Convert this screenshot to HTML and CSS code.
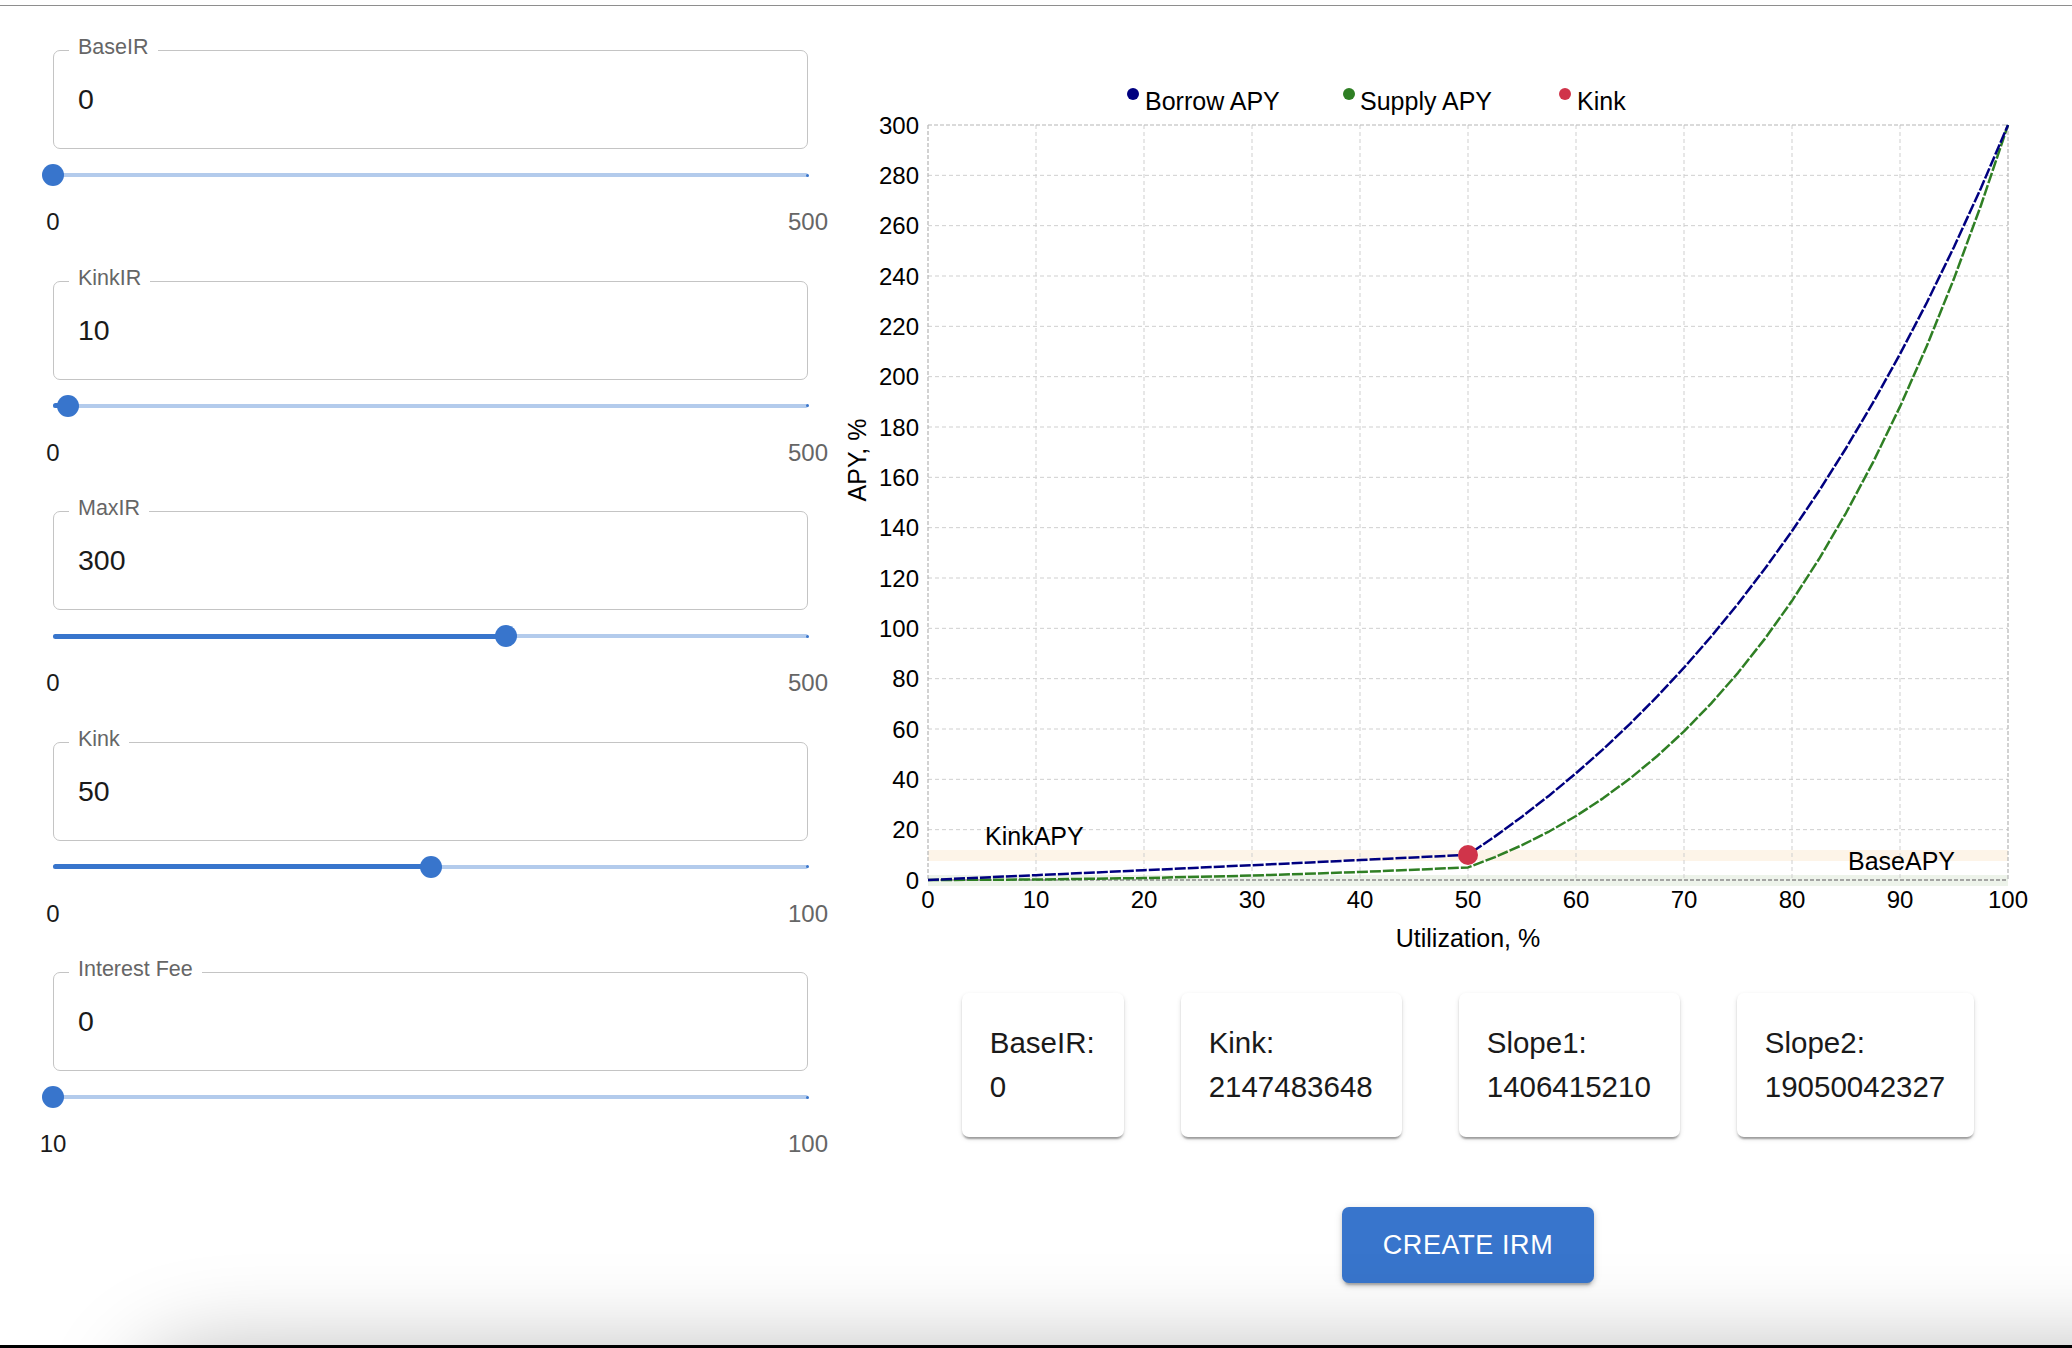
FILE: index.html
```html
<!DOCTYPE html>
<html lang="en">
<head>
<meta charset="utf-8">
<title>IRM</title>
<link rel="stylesheet" href="styles.css">
</head>
<body>
<div class="topline"></div>
<main class="layout">
  <section class="controls">
    <div class="param">
      <div class="field"><span class="field-label">BaseIR</span><span class="field-value">0</span></div>
      <div class="slider">
        <div class="rail"></div>
        <div class="track" style="width:0%"></div>
        <span class="end-dot"></span>
        <div class="thumb" style="left:0%"></div>
      </div>
      <div class="marks"><span class="mlabel active">0</span><span class="mlabel">500</span></div>
    </div>
    <div class="param">
      <div class="field"><span class="field-label">KinkIR</span><span class="field-value">10</span></div>
      <div class="slider">
        <div class="rail"></div>
        <div class="track" style="width:2%"></div>
        <span class="end-dot"></span>
        <div class="thumb" style="left:2%"></div>
      </div>
      <div class="marks"><span class="mlabel active">0</span><span class="mlabel">500</span></div>
    </div>
    <div class="param">
      <div class="field"><span class="field-label">MaxIR</span><span class="field-value">300</span></div>
      <div class="slider">
        <div class="rail"></div>
        <div class="track" style="width:60%"></div>
        <span class="end-dot"></span>
        <div class="thumb" style="left:60%"></div>
      </div>
      <div class="marks"><span class="mlabel active">0</span><span class="mlabel">500</span></div>
    </div>
    <div class="param">
      <div class="field"><span class="field-label">Kink</span><span class="field-value">50</span></div>
      <div class="slider">
        <div class="rail"></div>
        <div class="track" style="width:50%"></div>
        <span class="end-dot"></span>
        <div class="thumb" style="left:50%"></div>
      </div>
      <div class="marks"><span class="mlabel active">0</span><span class="mlabel">100</span></div>
    </div>
    <div class="param">
      <div class="field"><span class="field-label">Interest Fee</span><span class="field-value">0</span></div>
      <div class="slider">
        <div class="rail"></div>
        <div class="track" style="width:0%"></div>
        <span class="end-dot"></span>
        <div class="thumb" style="left:0%"></div>
      </div>
      <div class="marks"><span class="mlabel active">10</span><span class="mlabel">100</span></div>
    </div>
  </section>

  <section class="results">
    <svg class="chart" width="1208" height="900" viewBox="0 0 1208 900" xmlns="http://www.w3.org/2000/svg">
      <!-- legend -->
      <g class="legend">
        <circle cx="269" cy="34" r="6" fill="#000080"/>
        <text x="281" y="50">Borrow APY</text>
        <circle cx="485" cy="34" r="6" fill="#2f7f24"/>
        <text x="496" y="50">Supply APY</text>
        <circle cx="701" cy="34" r="6" fill="#d0344a"/>
        <text x="713" y="50">Kink</text>
      </g>

      <!-- reference bands -->
      <rect x="64" y="790" width="1080" height="11" fill="#fdf4e8"/>
      <rect x="64" y="815" width="1080" height="11" fill="#edf3ea"/>

      <!-- grid -->
      <g class="grid">
        <line x1="64" x2="1144" y1="115.33" y2="115.33"/>
        <line x1="64" x2="1144" y1="165.67" y2="165.67"/>
        <line x1="64" x2="1144" y1="216" y2="216"/>
        <line x1="64" x2="1144" y1="266.33" y2="266.33"/>
        <line x1="64" x2="1144" y1="316.67" y2="316.67"/>
        <line x1="64" x2="1144" y1="367" y2="367"/>
        <line x1="64" x2="1144" y1="417.33" y2="417.33"/>
        <line x1="64" x2="1144" y1="467.67" y2="467.67"/>
        <line x1="64" x2="1144" y1="518" y2="518"/>
        <line x1="64" x2="1144" y1="568.33" y2="568.33"/>
        <line x1="64" x2="1144" y1="618.67" y2="618.67"/>
        <line x1="64" x2="1144" y1="669" y2="669"/>
        <line x1="64" x2="1144" y1="719.33" y2="719.33"/>
        <line x1="64" x2="1144" y1="769.67" y2="769.67"/>
        <line x1="172" x2="172" y1="65" y2="820"/>
        <line x1="280" x2="280" y1="65" y2="820"/>
        <line x1="388" x2="388" y1="65" y2="820"/>
        <line x1="496" x2="496" y1="65" y2="820"/>
        <line x1="604" x2="604" y1="65" y2="820"/>
        <line x1="712" x2="712" y1="65" y2="820"/>
        <line x1="820" x2="820" y1="65" y2="820"/>
        <line x1="928" x2="928" y1="65" y2="820"/>
        <line x1="1036" x2="1036" y1="65" y2="820"/>
      </g>
      <g class="frame">
        <line x1="64" x2="1144" y1="65" y2="65"/>
        <line x1="1144" x2="1144" y1="65" y2="820"/>
        <line x1="64" x2="64" y1="65" y2="820"/>
      </g>
      <line class="xaxis" x1="64" x2="1144" y1="820" y2="820"/>

      <!-- tick labels -->
      <g class="yticks">
        <text x="55" y="73.5">300</text>
        <text x="55" y="123.8">280</text>
        <text x="55" y="174.2">260</text>
        <text x="55" y="224.5">240</text>
        <text x="55" y="274.8">220</text>
        <text x="55" y="325.2">200</text>
        <text x="55" y="375.5">180</text>
        <text x="55" y="425.8">160</text>
        <text x="55" y="476.2">140</text>
        <text x="55" y="526.5">120</text>
        <text x="55" y="576.8">100</text>
        <text x="55" y="627.2">80</text>
        <text x="55" y="677.5">60</text>
        <text x="55" y="727.8">40</text>
        <text x="55" y="778.2">20</text>
        <text x="55" y="828.5">0</text>
      </g>
      <g class="xticks">
        <text x="64" y="848">0</text>
        <text x="172" y="848">10</text>
        <text x="280" y="848">20</text>
        <text x="388" y="848">30</text>
        <text x="496" y="848">40</text>
        <text x="604" y="848">50</text>
        <text x="712" y="848">60</text>
        <text x="820" y="848">70</text>
        <text x="928" y="848">80</text>
        <text x="1036" y="848">90</text>
        <text x="1144" y="848">100</text>
      </g>
      <text class="axis-title" x="604" y="887" text-anchor="middle">Utilization, %</text>
      <text class="axis-title" transform="translate(2,400) rotate(-90)" text-anchor="middle">APY, %</text>

      <text class="ref-label" x="121" y="785">KinkAPY</text>
      <text class="ref-label" x="1091" y="810" text-anchor="end">BaseAPY</text>

      <!-- curves -->
      <path class="curve supply" d="M64,820 L172,819.52 L280,818.04 L388,815.56 L496,812.02 L604,807.42 L631,797.10 L658,785.18 L685,771.52 L712,755.97 L739,738.36 L766,718.53 L793,696.27 L820,671.39 L847,643.65 L874,612.82 L901,578.63 L928,540.82 L955,499.05 L982,453.01 L1009,402.34 L1036,346.67 L1063,285.57 L1090,218.59 L1117,145.26 L1144,65"/>
      <path class="curve borrow" d="M64,820 L172,815.16 L280,810.22 L388,805.19 L496,800.06 L604,794.83 L631,776.38 L658,756.68 L685,735.69 L712,713.28 L739,689.38 L766,663.89 L793,636.70 L820,607.70 L847,576.76 L874,543.76 L901,508.56 L928,471.03 L955,430.97 L982,388.25 L1009,342.68 L1036,294.08 L1063,242.24 L1090,186.94 L1117,127.95 L1144,65"/>
      <circle cx="604" cy="795" r="10" fill="#d0344a"/>
    </svg>

    <div class="cards">
      <div class="card"><div class="card-title">BaseIR:</div><div class="card-value">0</div></div>
      <div class="card"><div class="card-title">Kink:</div><div class="card-value">2147483648</div></div>
      <div class="card"><div class="card-title">Slope1:</div><div class="card-value">1406415210</div></div>
      <div class="card"><div class="card-title">Slope2:</div><div class="card-value">19050042327</div></div>
    </div>

    <button class="create" type="button">CREATE IRM</button>
  </section>
</main>
<div class="bottom-shade"></div>
<div class="bottom-edge"></div>
</body>
</html>
```

FILE: styles.css
```css
html, body {
  margin: 0;
  padding: 0;
  height: 100%;
  overflow: hidden;
  background: #ffffff;
}

body {
  font-family: "Liberation Sans", Arial, Helvetica, sans-serif;
  color: #000;
}

.topline {
  height: 5px;
  border-bottom: 1px solid #8e8e8e;
}

.layout {
  display: grid;
  grid-template-columns: 864px 1fr;
}

/* ---------- left controls ---------- */
.controls {
  padding: 44px 56px 0 53px;
  display: flex;
  flex-direction: column;
  gap: 44.5px;
}

.param {
  display: flex;
  flex-direction: column;
}

.field {
  position: relative;
  height: 99px;
  box-sizing: border-box;
  border: 1px solid #c4c4c4;
  border-radius: 7px;
  display: flex;
  align-items: center;
  padding-left: 24px;
}

.field-label {
  position: absolute;
  left: 15px;
  top: -14px;
  padding: 0 9px;
  background: #fff;
  font-size: 21.5px;
  line-height: 21px;
  color: #666;
  white-space: nowrap;
}

.field-value {
  font-size: 28.5px;
  color: #1a1a1a;
}

.slider {
  position: relative;
  height: 50px;
  margin-top: 1px;
}

.rail {
  position: absolute;
  left: 0;
  right: 0;
  top: 23px;
  height: 4px;
  border-radius: 2px;
  background: #b3cbec;
}

.track {
  position: absolute;
  left: 0;
  top: 22.5px;
  height: 5px;
  border-radius: 3px;
  background: #3875cc;
}

.end-dot {
  position: absolute;
  right: -1px;
  top: 23.5px;
  width: 3px;
  height: 3px;
  border-radius: 50%;
  background: #3875cc;
}

.thumb {
  position: absolute;
  top: 14px;
  width: 22px;
  height: 22px;
  margin-left: -11px;
  border-radius: 50%;
  background: #3875cc;
}

.marks {
  display: flex;
  justify-content: space-between;
  margin-top: 8px;
  height: 28px;
  line-height: 28px;
}

.mlabel {
  width: 0;
  display: flex;
  justify-content: center;
  white-space: nowrap;
  font-size: 24px;
  color: #666;
}

.mlabel.active {
  color: #1a1a1a;
}

/* ---------- right results ---------- */
.results {
  padding-top: 54px;
  display: flex;
  flex-direction: column;
  align-items: center;
}

.chart {
  display: block;
  overflow: visible;
  font-family: "Liberation Sans", Arial, Helvetica, sans-serif;
}

.legend text {
  font-size: 25px;
  fill: #000;
}

.grid line {
  stroke: #cfcfcf;
  stroke-width: 1;
  stroke-dasharray: 4 3;
}

.frame line {
  stroke: #b5b5b5;
  stroke-width: 1.2;
  stroke-dasharray: 4 2;
}

.xaxis {
  stroke: #8c8c8c;
  stroke-width: 1.5;
  stroke-dasharray: 4 2;
}

.yticks text {
  font-size: 24px;
  text-anchor: end;
  fill: #000;
}

.xticks text {
  font-size: 24px;
  text-anchor: middle;
  fill: #000;
}

.axis-title {
  font-size: 25px;
  fill: #000;
}

.ref-label {
  font-size: 25px;
  fill: #000;
}

.curve {
  fill: none;
  stroke-width: 2.5;
  stroke-dasharray: 11 2;
  stroke-linejoin: round;
}

.curve.borrow {
  stroke: #000080;
}

.curve.supply {
  stroke: #2f7f24;
}

.cards {
  display: flex;
  gap: 57px;
  margin-top: 33px;
}

.card {
  background: #fff;
  border-radius: 7px;
  padding: 28px 29px 28px 28px;
  font-size: 29.5px;
  line-height: 44px;
  color: #1a1a1a;
  box-shadow: 0 3.5px 2px -2px rgba(0, 0, 0, 0.22),
              0 2px 2px 0 rgba(0, 0, 0, 0.14),
              0 2px 5px 0 rgba(0, 0, 0, 0.12);
}

.create {
  margin-top: 70px;
  width: 252px;
  height: 76px;
  border: none;
  border-radius: 7px;
  background: #3875cc;
  color: #fff;
  font-family: "Liberation Sans", Arial, Helvetica, sans-serif;
  font-size: 27px;
  letter-spacing: 0.6px;
  box-shadow: 0 5px 2px -3px rgba(0, 0, 0, 0.2),
              0 3px 4px 0 rgba(0, 0, 0, 0.14),
              0 2px 9px 0 rgba(0, 0, 0, 0.12);
  cursor: pointer;
}

/* ---------- window edge effects ---------- */
.bottom-shade {
  position: fixed;
  left: 130px;
  right: -200px;
  bottom: -200px;
  height: 200px;
  border-radius: 80px;
  background: #ddd;
  box-shadow: 0 0 90px 0 rgba(0, 0, 0, 0.26);
}

.bottom-edge {
  position: fixed;
  left: 0;
  right: 0;
  bottom: 0;
  height: 3px;
  background: #000;
}
```
